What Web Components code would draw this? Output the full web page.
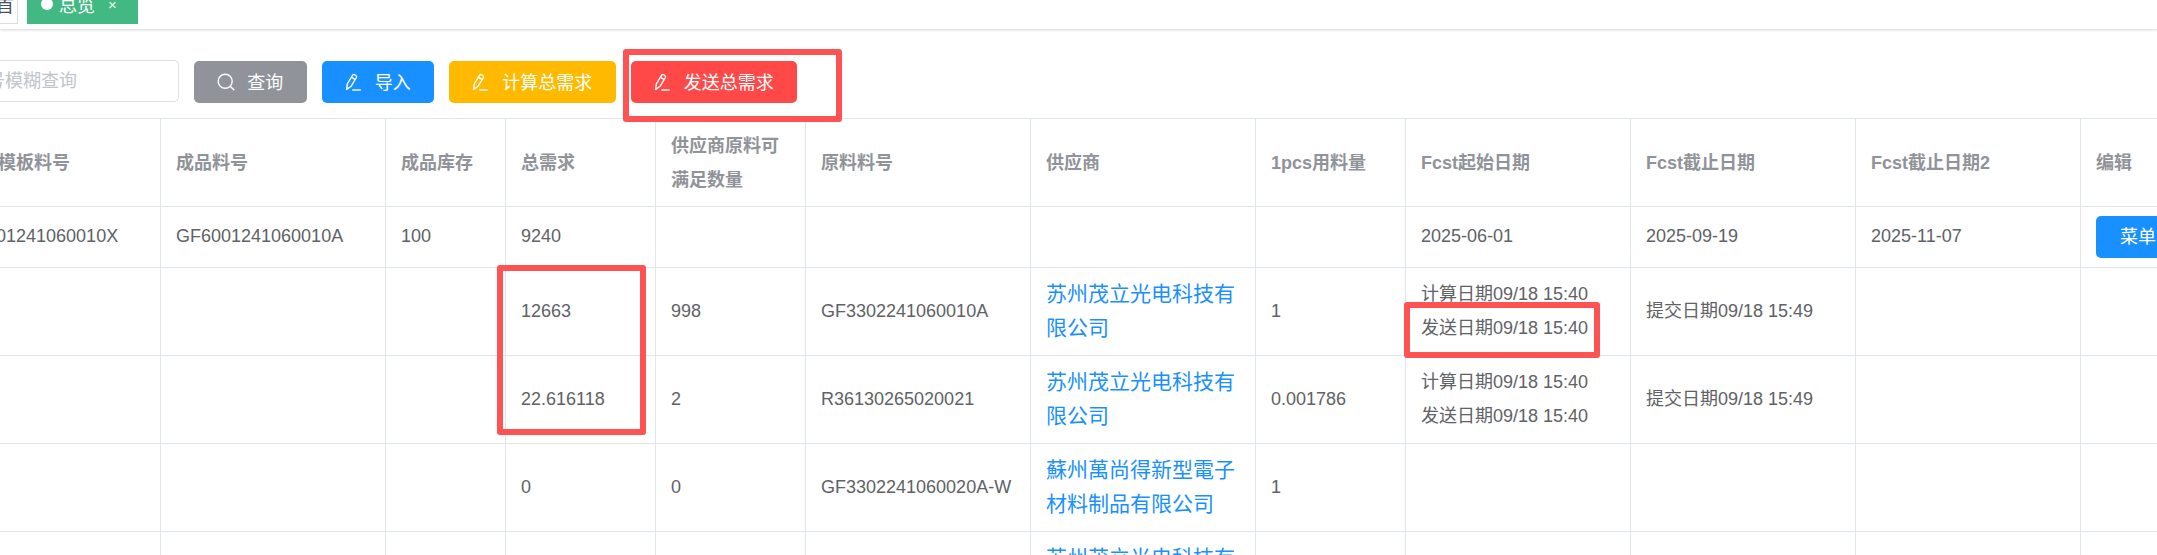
<!DOCTYPE html>
<html lang="zh">
<head>
<meta charset="utf-8">
<title>总览</title>
<style>
  html, body {
    margin: 0;
    height: 555px;
    overflow: hidden;
    background: #fff;
    font-family: "Liberation Sans", "Noto Sans CJK SC", sans-serif;
  }
  #page {
    position: relative;
    width: 2157px;
    height: 555px;
    overflow: hidden;
  }
</style>
</head>
<body>
<div id="page">
  <tags-bar>
    <tag-item>首</tag-item>
    <tag-item active>总览</tag-item>
  </tags-bar>
  <tool-bar>
    <search-box placeholder="请输入成品料号模糊查询"></search-box>
    <tool-button color="#909399" icon="search">查询</tool-button>
    <tool-button color="#1890ff" icon="edit">导入</tool-button>
    <tool-button color="#ffba00" icon="edit">计算总需求</tool-button>
    <tool-button color="#ff4949" icon="edit">发送总需求</tool-button>
  </tool-bar>
  <demand-table></demand-table>
  <mark-box style="left:623px;top:49px;width:219px;height:73px"></mark-box>
  <mark-box style="left:497px;top:265px;width:149px;height:170px"></mark-box>
  <mark-box style="left:1404px;top:302px;width:196px;height:56px"></mark-box>
</div>

<script>
const ICONS = {
  search: `<svg viewBox="0 0 18 18" width="18" height="18" fill="none" stroke="#fff" stroke-width="1.4">
    <circle cx="8.2" cy="8.2" r="7"/><path d="M13.2 13.2l3.6 3.6" stroke-linecap="round"/></svg>`,
  edit: `<svg viewBox="0 0 18 18" width="18" height="18" fill="none" stroke="#fff" stroke-width="1.4" stroke-linejoin="round">
    <path d="M1.6 16.4l.7-5.4L7.5 2.3q.9-1.3 2.3-.5l1 .7q1.2.8.6 2L6.2 13.2z"/>
    <path d="M6.3 4.2l3.9 2.4"/><path d="M7.2 17h8.6"/></svg>`
};

class TagsBar extends HTMLElement {
  constructor() {
    super();
    this.attachShadow({ mode: 'open' }).innerHTML = `
    <style>
      :host {
        display: flex;
        align-items: flex-start;
        gap: 9px;
        height: 29px;
        background: #fff;
        box-shadow: 0 1px 3px 0 rgba(0,0,0,.14), 0 0 3px 0 rgba(0,0,0,.05);
        position: relative;
      }
    </style>
    <slot></slot>`;
  }
}
customElements.define('tags-bar', TagsBar);

class TagItem extends HTMLElement {
  constructor() {
    super();
    this.attachShadow({ mode: 'open' }).innerHTML = `
    <style>
      :host {
        display: flex;
        align-items: center;
        box-sizing: border-box;
        height: 39px;
        margin-top: -15px;
        width: 58px;
        margin-left: -40px;
        padding-right: 3px;
        padding-bottom: 1px;
        justify-content: flex-end;
        background: #fff;
        border: 1px solid #d8dce5;
        color: #495060;
        font-size: 18px;
      }
      :host([active]) {
        width: 111px;
        margin-left: 0;
        padding: 0 0 1px 13px;
        justify-content: flex-start;
        background: #42b983;
        border-color: #42b983;
        color: #fff;
      }
      .dot, .close { display: none; }
      :host([active]) .dot {
        display: block;
        width: 12px;
        height: 12px;
        margin-right: 6px;
        border-radius: 50%;
        background: #fff;
      }
      :host([active]) .close {
        display: block;
        margin-left: 13px;
        font-size: 15px;
        opacity: .9;
      }
    </style>
    <span class="dot"></span><slot></slot><span class="close">×</span>`;
  }
}
customElements.define('tag-item', TagItem);

class ToolBar extends HTMLElement {
  constructor() {
    super();
    this.attachShadow({ mode: 'open' }).innerHTML = `
    <style>
      :host {
        display: flex;
        align-items: flex-start;
        gap: 15px;
        box-sizing: border-box;
        height: 89px;
        padding-top: 31px;
        margin-left: -137px;
      }
    </style>
    <slot></slot>`;
  }
}
customElements.define('tool-bar', ToolBar);

class SearchBox extends HTMLElement {
  constructor() {
    super();
    this.attachShadow({ mode: 'open' }).innerHTML = `
    <style>
      :host { display: block; }
      input {
        display: block;
        box-sizing: border-box;
        width: 316px;
        height: 42px;
        margin: 0;
        padding: 1px 15px 0;
        border: 1px solid #dcdfe6;
        border-radius: 5px;
        outline: 0;
        font: 18px "Liberation Sans", "Noto Sans CJK SC", sans-serif;
      }
      input::placeholder { color: #c0c4cc; opacity: 1; }
    </style>
    <input type="text">`;
    this.shadowRoot.querySelector('input').placeholder = this.getAttribute('placeholder') || '';
  }
}
customElements.define('search-box', SearchBox);

class ToolButton extends HTMLElement {
  constructor() {
    super();
    const icon = ICONS[this.getAttribute('icon')] || '';
    this.attachShadow({ mode: 'open' }).innerHTML = `
    <style>
      :host {
        display: flex;
        align-items: center;
        gap: 12px;
        box-sizing: border-box;
        height: 42px;
        margin-top: 1px;
        padding: 0 23.25px;
        border-radius: 5px;
        background: var(--btn, #1890ff);
        color: #fff;
        font-size: 18px;
        white-space: nowrap;
      }
      svg { display: block; flex: none; }
      .label { margin-bottom: 2px; }
    </style>
    ${icon}<span class="label"><slot></slot></span>`;
    this.style.setProperty('--btn', this.getAttribute('color'));
  }
}
customElements.define('tool-button', ToolButton);

const COLUMNS = [
  [225, '模板料号'], [225, '成品料号'], [120, '成品库存'], [150, '总需求'],
  [150, '供应商原料可满足数量'], [225, '原料料号'], [225, '供应商'], [150, '1pcs用料量'],
  [225, 'Fcst起始日期'], [225, 'Fcst截止日期'], [225, 'Fcst截止日期2'], [150, '编辑']
];

const SENT = '计算日期09/18 15:40<br>发送日期09/18 15:40';
const SUBMIT = '提交日期09/18 15:49';
const MOULIGHT = '苏州茂立光电科技有限公司';

const ROWS = [
  { h: 61, cells: ['GF6001241060010X', 'GF6001241060010A', '100', '9240', '', '', '', '',
    '2025-06-01', '2025-09-19', '2025-11-07', { btn: '菜单' }] },
  { h: 88, cells: ['', '', '', '12663', '998', 'GF3302241060010A', { href: MOULIGHT }, '1', SENT, SUBMIT, '', ''] },
  { h: 88, cells: ['', '', '', '22.616118', '2', 'R36130265020021', { href: MOULIGHT }, '0.001786', SENT, SUBMIT, '', ''] },
  { h: 88, cells: ['', '', '', '0', '0', 'GF3302241060020A-W', { href: '蘇州萬尚得新型電子材料制品有限公司' }, '1', '', '', '', ''] },
  { h: 88, cells: ['', '', '', '', '', '', { href: MOULIGHT }, '', '', '', '', ''] }
];

class DemandTable extends HTMLElement {
  constructor() {
    super();
    const cols = COLUMNS.map(c => `<col style="width:${c[0]}px">`).join('');
    const head = COLUMNS.map(c => `<th>${c[1]}</th>`).join('');
    const body = ROWS.map(r => `<tr style="height:${r.h}px">` + r.cells.map(c => {
      if (c.href) return `<td><a>${c.href}</a></td>`;
      if (c.btn) return `<td><span class="btn">${c.btn}</span></td>`;
      return `<td>${c}</td>`;
    }).join('') + '</tr>').join('');
    this.attachShadow({ mode: 'open' }).innerHTML = `
    <style>
      :host {
        display: block;
        margin-left: -65px;
      }
      table {
        table-layout: fixed;
        width: 2295px;
        border-collapse: separate;
        border-spacing: 0;
        border-top: 1px solid #dfe6ec;
        font-size: 18px;
        color: #606266;
      }
      tr { height: 88px; }
      th, td {
        box-sizing: border-box;
        padding: 0 16px 0 15px;
        border-left: 1px solid #dfe6ec;
        border-bottom: 1px solid #dfe6ec;
        text-align: left;
        line-height: 34px;
        vertical-align: middle;
      }
      td { padding-bottom: 2px; }
      th {
        font-weight: bold;
        color: #909399;
      }
      th:first-child { padding-left: 62px; }
      a {
        display: block;
        color: #1890ff;
        font-size: 21px;
        line-height: 34px;
      }
      .btn {
        display: block;
        box-sizing: border-box;
        width: 96px;
        height: 42px;
        margin-top: 2px;
        padding-left: 24px;
        border-radius: 5px;
        background: #1890ff;
        color: #fff;
        line-height: 42px;
      }
    </style>
    <table>
      <colgroup>${cols}</colgroup>
      <thead><tr>${head}</tr></thead>
      <tbody>${body}</tbody>
    </table>`;
  }
}
customElements.define('demand-table', DemandTable);

class MarkBox extends HTMLElement {
  constructor() {
    super();
    this.attachShadow({ mode: 'open' }).innerHTML = `
    <style>
      :host {
        position: absolute;
        box-sizing: border-box;
        border: 6px solid #ff5252;
        border-radius: 3px;
      }
    </style>`;
  }
}
customElements.define('mark-box', MarkBox);
</script>
</body>
</html>
